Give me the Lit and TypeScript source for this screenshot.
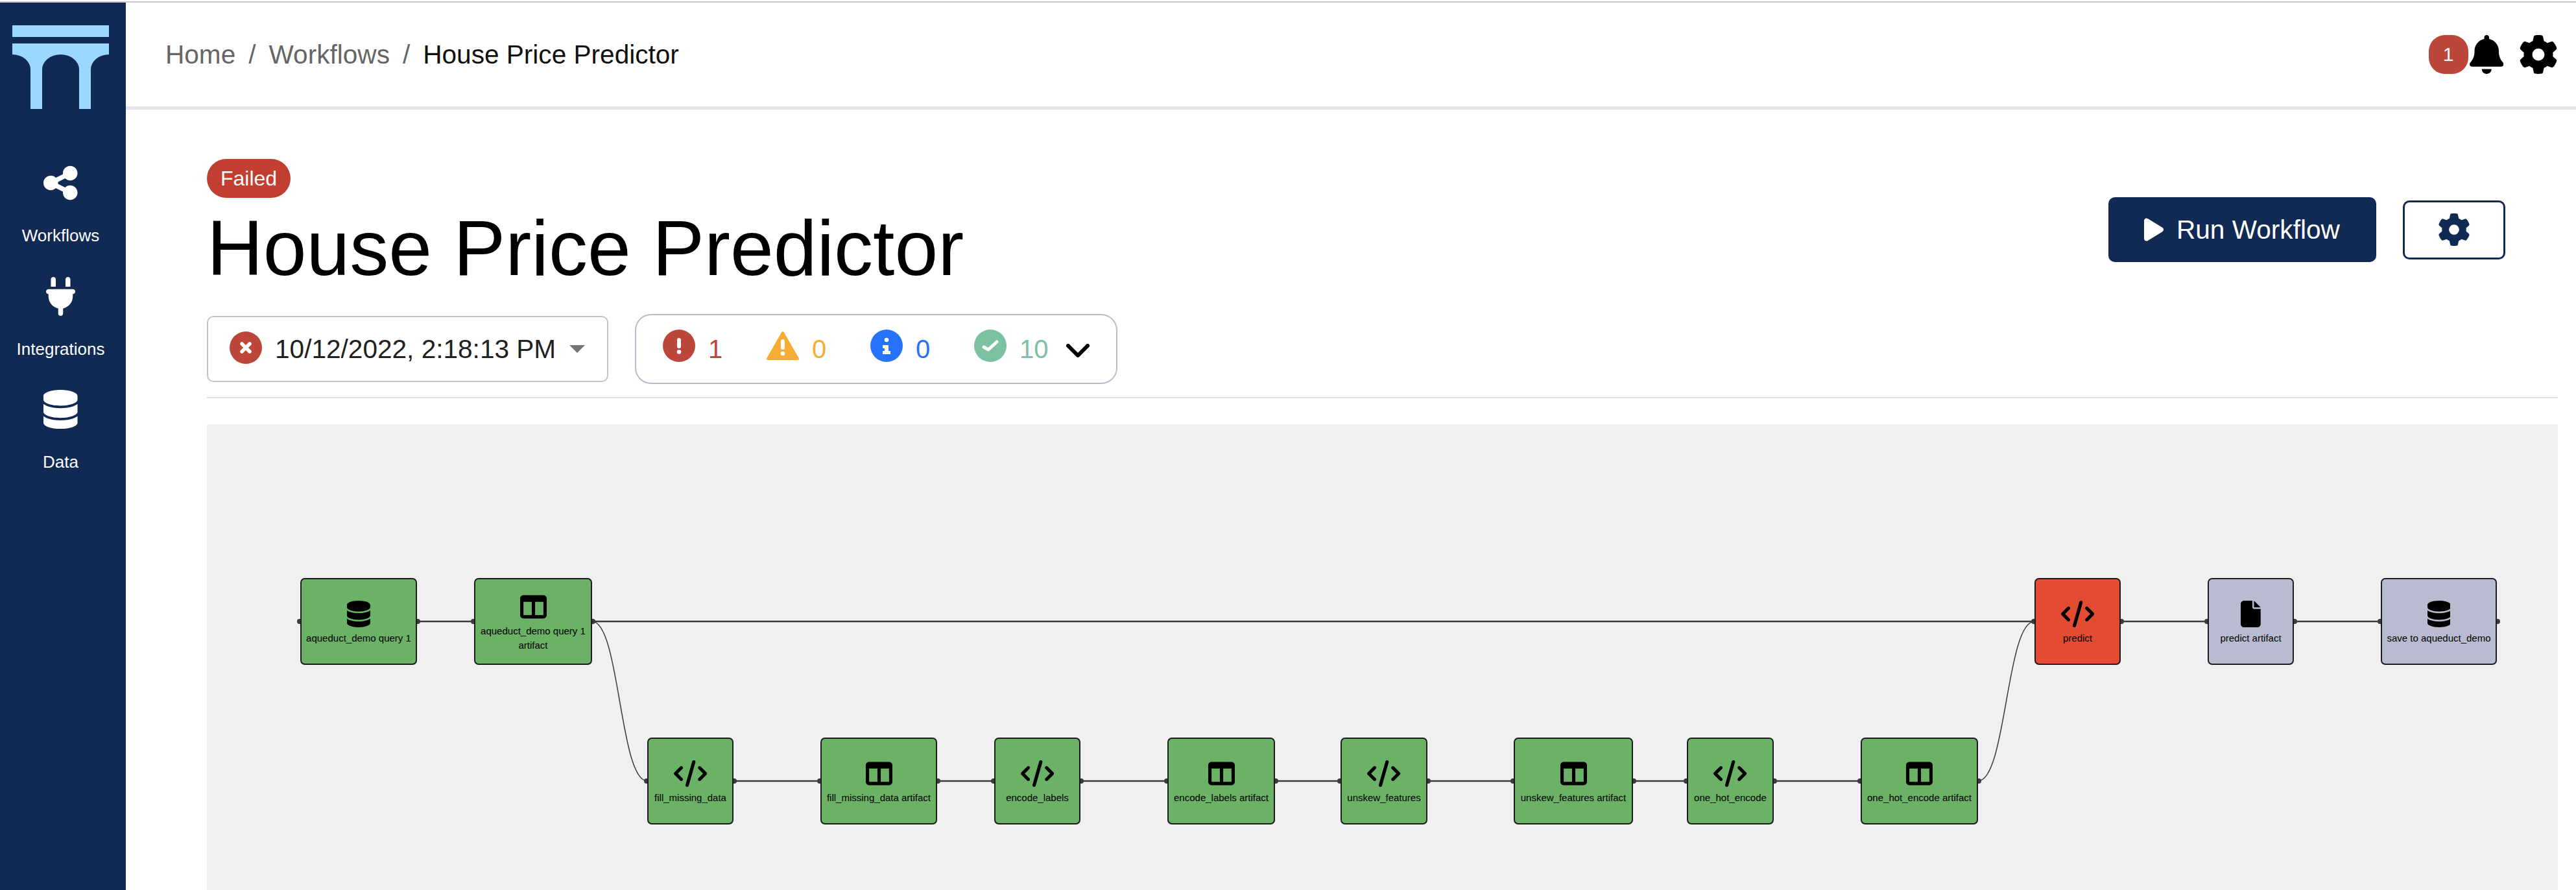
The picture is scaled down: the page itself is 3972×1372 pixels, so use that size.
import { LitElement, html, svg, css } from 'lit';
import { customElement } from 'lit/decorators.js';

type IconName = 'share' | 'plug' | 'database' | 'table' | 'code' | 'file' | 'gear' | 'bell' | 'play';

const ICONS: Record<IconName, { box: string; d: string }> = {
  share: {
    box: '0 0 448 512',
    d: 'M352 224c53 0 96-43 96-96s-43-96-96-96s-96 43-96 96c0 4 .2 8 .7 11.9l-94.1 47C145.4 170.2 121.9 160 96 160c-53 0-96 43-96 96s43 96 96 96c25.9 0 49.4-10.2 66.6-26.9l94.1 47c-.5 3.9-.7 7.8-.7 11.9c0 53 43 96 96 96s96-43 96-96s-43-96-96-96c-25.9 0-49.4 10.2-66.6 26.9l-94.1-47c.5-3.9 .7-7.8 .7-11.9s-.2-8-.7-11.9l94.1-47C302.6 213.8 326.1 224 352 224z',
  },
  plug: {
    box: '0 0 384 512',
    d: 'M96 0C78.3 0 64 14.3 64 32v96h64V32c0-17.7-14.3-32-32-32zM288 0c-17.7 0-32 14.3-32 32v96h64V32c0-17.7-14.3-32-32-32zM32 160c-17.7 0-32 14.3-32 32s14.3 32 32 32v32c0 77.4 55 142 128 156.8V480c0 17.7 14.3 32 32 32s32-14.3 32-32V412.8C297 398 352 333.4 352 256V224c17.7 0 32-14.3 32-32s-14.3-32-32-32H32z',
  },
  database: {
    box: '0 0 448 512',
    d: 'M448 80v48c0 44.2-100.3 80-224 80S0 172.2 0 128V80C0 35.8 100.3 0 224 0S448 35.8 448 80zM393.2 214.7c20.8-7.4 39.9-16.9 54.8-28.6V288c0 44.2-100.3 80-224 80S0 332.2 0 288V186.1c14.9 11.8 34 21.2 54.8 28.6C99.7 230.7 159.5 240 224 240s124.3-9.3 169.2-25.3zM0 346.1c14.9 11.8 34 21.2 54.8 28.6C99.7 390.7 159.5 400 224 400s124.3-9.3 169.2-25.3c20.8-7.4 39.9-16.9 54.8-28.6V432c0 44.2-100.3 80-224 80S0 476.2 0 432V346.1z',
  },
  table: {
    box: '0 0 512 512',
    d: 'M0 96C0 60.7 28.7 32 64 32H448c35.3 0 64 28.7 64 64V416c0 35.3-28.7 64-64 64H64c-35.3 0-64-28.7-64-64V96zm64 64V416H224V160H64zm384 0H288V416H448V160z',
  },
  code: {
    box: '0 0 640 512',
    d: 'M392.8 1.2c-17-4.9-34.7 5-39.6 22l-128 448c-4.9 17 5 34.7 22 39.6s34.7-5 39.6-22l128-448c4.9-17-5-34.7-22-39.6zm80.6 120.1c-12.5 12.5-12.5 32.8 0 45.3L562.7 256l-89.4 89.4c-12.5 12.5-12.5 32.8 0 45.3s32.8 12.5 45.3 0l112-112c12.5-12.5 12.5-32.8 0-45.3l-112-112c-12.5-12.5-32.8-12.5-45.3 0zm-306.7 0c-12.5-12.5-32.8-12.5-45.3 0l-112 112c-12.5 12.5-12.5 32.8 0 45.3l112 112c12.5 12.5 32.8 12.5 45.3 0s12.5-32.8 0-45.3L77.3 256l89.4-89.4c12.5-12.5 12.5-32.8 0-45.3z',
  },
  file: {
    box: '0 0 384 512',
    d: 'M0 64C0 28.7 28.7 0 64 0H224V128c0 17.7 14.3 32 32 32H384V448c0 35.3-28.7 64-64 64H64c-35.3 0-64-28.7-64-64V64zm384 64H256V0L384 128z',
  },
  gear: {
    box: '0 0 512 512',
    d: 'M495.9 166.6c3.2 8.7 .5 18.4-6.4 24.6l-43.3 39.4c1.1 8.3 1.7 16.8 1.7 25.4s-.6 17.1-1.7 25.4l43.3 39.4c6.9 6.2 9.6 15.9 6.4 24.6c-4.4 11.9-9.7 23.3-15.8 34.3l-4.7 8.1c-6.6 11-14 21.4-22.1 31.2c-5.9 7.2-15.7 9.6-24.5 6.8l-55.7-17.7c-13.4 10.3-28.2 18.9-44 25.4l-12.5 57.1c-2 9.1-9 16.3-18.2 17.8c-13.8 2.3-28 3.5-42.5 3.5s-28.7-1.2-42.5-3.5c-9.2-1.5-16.2-8.7-18.2-17.8l-12.5-57.1c-15.8-6.5-30.6-15.1-44-25.4L83.1 425.9c-8.8 2.8-18.6 .3-24.5-6.8c-8.1-9.8-15.5-20.2-22.1-31.2l-4.7-8.1c-6.1-11-11.4-22.4-15.8-34.3c-3.2-8.7-.5-18.4 6.4-24.6l43.3-39.4C64.6 273.1 64 264.6 64 256s.6-17.1 1.7-25.4L22.4 191.2c-6.9-6.2-9.6-15.9-6.4-24.6c4.4-11.9 9.7-23.3 15.8-34.3l4.7-8.1c6.6-11 14-21.4 22.1-31.2c5.9-7.2 15.7-9.6 24.5-6.8l55.7 17.7c13.4-10.3 28.2-18.9 44-25.4l12.5-57.1c2-9.1 9-16.3 18.2-17.8C227.3 1.2 241.5 0 256 0s28.7 1.2 42.5 3.5c9.2 1.5 16.2 8.7 18.2 17.8l12.5 57.1c15.8 6.5 30.6 15.1 44 25.4l55.7-17.7c8.8-2.8 18.6-.3 24.5 6.8c8.1 9.8 15.5 20.2 22.1 31.2l4.7 8.1c6.1 11 11.4 22.4 15.8 34.3zM256 336c44.2 0 80-35.8 80-80s-35.8-80-80-80s-80 35.8-80 80s35.8 80 80 80z',
  },
  bell: {
    box: '0 0 448 512',
    d: 'M224 0c-17.7 0-32 14.3-32 32V51.2C119 66 64 130.6 64 208v18.8c0 47-17.3 92.4-48.5 127.6l-7.4 8.3c-8.4 9.4-10.4 22.9-5.3 34.4S19.4 416 32 416H416c12.6 0 24-7.4 29.2-18.9s3.1-25-5.3-34.4l-7.4-8.3C401.3 319.2 384 273.9 384 226.8V208c0-77.4-55-142-128-156.8V32c0-17.7-14.3-32-32-32zm45.3 493.3c12-12 18.7-28.3 18.7-45.3H224 160c0 17 6.7 33.3 18.7 45.3s28.3 18.7 45.3 18.7s33.3-6.7 45.3-18.7z',
  },
  play: {
    box: '0 0 384 512',
    d: 'M73 39c-14.8-9.1-33.4-9.4-48.5-.9S0 62.6 0 80V432c0 17.4 9.4 33.4 24.5 41.9s33.7 8.1 48.5-.9L361 297c14.3-8.7 23-24.2 23-41s-8.7-32.2-23-41L73 39z',
  },
};

const icon = (name: IconName, cls = '') =>
  html`<svg class=${cls} viewBox=${ICONS[name].box} fill="currentColor"><path d=${ICONS[name].d}></path></svg>`;

interface DagNode {
  label: string;
  icon: IconName;
  x: number;
  w: number;
  row: 0 | 1;
  tone: 'ok' | 'fail' | 'idle';
}

// coordinates are relative to the canvas, this is the free diagram area
const ROW_Y = [237, 483];
const NODE_H = 134;
const NODES: DagNode[] = [
  { label: 'aqueduct_demo query 1', icon: 'database', x: 144, w: 180, row: 0, tone: 'ok' },
  { label: 'aqueduct_demo query 1 artifact', icon: 'table', x: 412, w: 182, row: 0, tone: 'ok' },
  { label: 'fill_missing_data', icon: 'code', x: 679, w: 133, row: 1, tone: 'ok' },
  { label: 'fill_missing_data artifact', icon: 'table', x: 946, w: 180, row: 1, tone: 'ok' },
  { label: 'encode_labels', icon: 'code', x: 1214, w: 133, row: 1, tone: 'ok' },
  { label: 'encode_labels artifact', icon: 'table', x: 1481, w: 166, row: 1, tone: 'ok' },
  { label: 'unskew_features', icon: 'code', x: 1748, w: 134, row: 1, tone: 'ok' },
  { label: 'unskew_features artifact', icon: 'table', x: 2015, w: 184, row: 1, tone: 'ok' },
  { label: 'one_hot_encode', icon: 'code', x: 2282, w: 134, row: 1, tone: 'ok' },
  { label: 'one_hot_encode artifact', icon: 'table', x: 2550, w: 181, row: 1, tone: 'ok' },
  { label: 'predict', icon: 'code', x: 2818, w: 133, row: 0, tone: 'fail' },
  { label: 'predict artifact', icon: 'file', x: 3085, w: 133, row: 0, tone: 'idle' },
  { label: 'save to aqueduct_demo', icon: 'database', x: 3352, w: 179, row: 0, tone: 'idle' },
];

const STATUS_COUNTS = [
  { kind: 'error', count: 1 },
  { kind: 'warning', count: 0 },
  { kind: 'info', count: 0 },
  { kind: 'success', count: 10 },
];

@customElement('app-root')
export class AppRoot extends LitElement {
  static styles = css`
    :host {
      display: block;
      font-family: 'Liberation Sans', Arial, sans-serif;
      color: #000;
      background: #fff;
    }
    * {
      box-sizing: border-box;
    }
    svg {
      display: block;
      flex: none;
    }

    .page {
      display: flex;
      height: 1370px;
      margin-top: 2px;
      border-top: 2px solid #c8c8c8;
      overflow: hidden;
    }

    .sidebar {
      flex: none;
      width: 194px;
      padding: 35px 7px 0 0;
      background: #102a53;
      color: #fff;
      display: flex;
      flex-direction: column;
      align-items: center;
    }
    .logo {
      width: 149px;
      height: 129px;
      color: #9bd8ff;
      margin-bottom: 84px;
    }
    .nav-item {
      height: 174.5px;
      display: flex;
      flex-direction: column;
      align-items: center;
    }
    .nav-icon {
      height: 60px;
    }
    .nav-label {
      margin-top: 36px;
      font-size: 26px;
      line-height: 30px;
    }

    .main {
      flex: 1;
      min-width: 0;
      display: flex;
      flex-direction: column;
    }

    .topbar {
      flex: none;
      height: 165px;
      padding: 0 28px 0 61px;
      border-bottom: 5px solid #e2e4ee;
      display: flex;
      align-items: center;
      justify-content: space-between;
    }
    .crumbs {
      display: flex;
      gap: 20px;
      font-size: 40.6px;
      color: #666;
    }
    .crumbs .current {
      color: #111;
    }
    .top-actions {
      display: flex;
      align-items: center;
    }
    .alert-count {
      width: 61px;
      height: 60px;
      border-radius: 25px;
      background: #bc4639;
      color: #fff;
      font-size: 30px;
      display: flex;
      align-items: center;
      justify-content: center;
    }
    .bell {
      height: 60px;
      margin-left: 2px;
    }
    .top-gear {
      height: 60px;
      margin-left: 24px;
    }

    .content {
      flex: 1;
      min-height: 0;
      padding: 76px 28px 0 125px;
      display: flex;
      flex-direction: column;
    }
    .head {
      flex: none;
      display: flex;
      justify-content: space-between;
      align-items: flex-start;
    }
    .status-pill {
      display: flex;
    }
    .pill {
      width: 129px;
      height: 60px;
      border-radius: 30px;
      background: #c13e31;
      color: #fff;
      font-size: 32px;
      display: flex;
      align-items: center;
      justify-content: center;
    }
    h1 {
      margin: 17px 0 0;
      font-size: 120px;
      line-height: 120px;
      font-weight: 400;
    }
    .actions {
      display: flex;
      align-items: center;
      gap: 41px;
      margin: 59px 81px 0 0;
    }
    .run {
      width: 413px;
      height: 100px;
      padding-left: 55px;
      border-radius: 10px;
      background: #102a53;
      color: #fff;
      font-size: 40.6px;
      display: flex;
      align-items: center;
      gap: 20px;
    }
    .run svg {
      width: 30px;
      height: 40px;
    }
    .settings {
      width: 158px;
      height: 91px;
      border: 3px solid #102a53;
      border-radius: 10px;
      color: #102a53;
      display: flex;
      align-items: center;
      justify-content: center;
    }
    .settings svg {
      height: 50px;
    }

    .filters {
      flex: none;
      margin-top: 42px;
      display: flex;
      align-items: center;
      gap: 41px;
    }
    .run-select {
      width: 619px;
      height: 102px;
      padding-left: 33px;
      border: 2.5px solid #c4c4c4;
      border-radius: 10px;
      color: #212121;
      font-size: 40.6px;
      display: flex;
      align-items: center;
    }
    .run-select .dot {
      width: 50px;
      height: 50px;
      margin: -4px 20px 0 0;
    }
    .caret {
      width: 0;
      height: 0;
      margin-left: 21px;
      border-left: 12.5px solid transparent;
      border-right: 12.5px solid transparent;
      border-top: 12.5px solid #757575;
    }
    .status-pane {
      width: 744px;
      height: 108px;
      padding-left: 41px;
      border: 2.5px solid #b9bcd1;
      border-radius: 25px;
      font-size: 40px;
      display: flex;
      align-items: center;
    }
    .status {
      width: 160px;
      display: flex;
      align-items: center;
      gap: 20px;
    }
    .status:last-of-type {
      width: auto;
    }
    .status svg {
      width: 50px;
      height: 50px;
      margin-bottom: 10px;
    }
    .status.error {
      color: #bc4639;
    }
    .status.warning {
      color: #f5ad36;
    }
    .status.info {
      color: #2672fa;
    }
    .status.success {
      color: #7bc1a2;
    }
    .chevron {
      width: 36px;
      height: 21px;
      margin: 5px 0 0 27px;
      color: #000;
    }

    .rule {
      flex: none;
      height: 2px;
      margin: 20px 0 40px;
      background: #e0e0e0;
    }

    .canvas {
      flex: 1;
      min-height: 0;
      position: relative;
      background: #f0f0f0;
      overflow: hidden;
    }
    .edges {
      position: absolute;
      inset: 0;
      width: 100%;
      height: 100%;
    }
    .edge {
      fill: none;
      stroke: #3c3c3c;
      stroke-width: 2.5;
    }
    .edge.curve {
      stroke-width: 1.5;
    }
    .handle {
      fill: #3c3c3c;
    }
    .node {
      position: absolute;
      height: ${NODE_H}px;
      padding: 5px 3px 0;
      border: 2.5px solid #1c1c1c;
      border-radius: 7px;
      display: flex;
      flex-direction: column;
      align-items: center;
      justify-content: center;
      gap: 6px;
      font-size: 15px;
      line-height: 22px;
      text-align: center;
    }
    .node svg {
      height: 41px;
    }
    .node.ok {
      background: #6bb166;
    }
    .node.fail {
      background: #e34c33;
    }
    .node.idle {
      background: #b9bcd1;
    }
  `;

  private statusIcon(kind: string) {
    switch (kind) {
      case 'error':
        return html`<svg viewBox="0 0 50 50">
          <circle cx="25" cy="25" r="25" fill="currentColor"></circle>
          <rect x="22" y="13" width="6" height="16" rx="3" fill="#fff"></rect>
          <circle cx="25" cy="34.5" r="3.3" fill="#fff"></circle>
        </svg>`;
      case 'warning':
        return html`<svg viewBox="0 0 50 50">
          <path d="M25 5L48 45H2Z" fill="currentColor" stroke="currentColor" stroke-width="4" stroke-linejoin="round"></path>
          <rect x="22" y="15" width="6" height="16" rx="3" fill="#fff"></rect>
          <circle cx="25" cy="37" r="3.3" fill="#fff"></circle>
        </svg>`;
      case 'info':
        return html`<svg viewBox="0 0 50 50">
          <circle cx="25" cy="25" r="25" fill="currentColor"></circle>
          <circle cx="25" cy="16" r="3.3" fill="#fff"></circle>
          <path d="M19 24H28V33H31V38H19V33H22V29H19Z" fill="#fff"></path>
        </svg>`;
      default:
        return html`<svg viewBox="0 0 50 50">
          <circle cx="25" cy="25" r="25" fill="currentColor"></circle>
          <path d="M15 27L22 31L35 19" fill="none" stroke="#fff" stroke-width="5" stroke-linecap="round" stroke-linejoin="round"></path>
        </svg>`;
    }
  }

  private renderEdges() {
    const mid = (n: DagNode) => ROW_Y[n.row] + NODE_H / 2;
    return html`<svg class="edges">
      ${NODES.slice(0, -1).map((from, i) => {
        const to = NODES[i + 1];
        const x1 = from.x + from.w;
        const x2 = to.x;
        const y1 = mid(from);
        const y2 = mid(to);
        if (y1 === y2) return svg`<path class="edge" d="M${x1} ${y1}H${x2}"></path>`;
        const cx = (x1 + x2) / 2;
        return svg`<path class="edge curve" d="M${x1} ${y1}C${cx} ${y1} ${cx} ${y2} ${x2} ${y2}"></path>`;
      })}
      <path class="edge" d="M${NODES[1].x + NODES[1].w} ${mid(NODES[1])}H${NODES[10].x}"></path>
      ${NODES.map(
        (n) => svg`
          <circle class="handle" cx=${n.x - 1} cy=${mid(n)} r="4"></circle>
          <circle class="handle" cx=${n.x + n.w + 1} cy=${mid(n)} r="4"></circle>
        `
      )}
    </svg>`;
  }

  render() {
    return html`
      <div class="page">
        <aside class="sidebar">
          <svg class="logo" viewBox="0 0 149 129" fill="currentColor">
            <rect width="149" height="18"></rect>
            <path d="M0 28H149V45A28 23 0 0 0 121 68V129H103V68A28.5 23 0 0 0 46 68V129H28V68A28 23 0 0 0 0 45Z"></path>
          </svg>
          <div class="nav-item">${icon('share', 'nav-icon')}<span class="nav-label">Workflows</span></div>
          <div class="nav-item">${icon('plug', 'nav-icon')}<span class="nav-label">Integrations</span></div>
          <div class="nav-item">${icon('database', 'nav-icon')}<span class="nav-label">Data</span></div>
        </aside>

        <div class="main">
          <header class="topbar">
            <nav class="crumbs">
              <span>Home</span><span>/</span><span>Workflows</span><span>/</span>
              <span class="current">House Price Predictor</span>
            </nav>
            <div class="top-actions">
              <span class="alert-count">1</span>
              ${icon('bell', 'bell')} ${icon('gear', 'top-gear')}
            </div>
          </header>

          <section class="content">
            <div class="head">
              <div>
                <div class="status-pill"><div class="pill">Failed</div></div>
                <h1>House Price Predictor</h1>
              </div>
              <div class="actions">
                <div class="run">${icon('play')}<span>Run Workflow</span></div>
                <div class="settings">${icon('gear')}</div>
              </div>
            </div>

            <div class="filters">
              <div class="run-select">
                <svg class="dot" viewBox="0 0 50 50">
                  <circle cx="25" cy="25" r="25" fill="#bc4639"></circle>
                  <path d="M19 19L31 31M31 19L19 31" stroke="#fff" stroke-width="5.5" stroke-linecap="round"></path>
                </svg>
                <span>10/12/2022, 2:18:13 PM</span>
                <span class="caret"></span>
              </div>
              <div class="status-pane">
                ${STATUS_COUNTS.map(
                  (s) => html`<div class="status ${s.kind}">${this.statusIcon(s.kind)}<span>${s.count}</span></div>`
                )}
                <svg class="chevron" viewBox="0 0 36 21">
                  <path d="M3 3L18 18L33 3" fill="none" stroke="currentColor" stroke-width="6" stroke-linecap="round" stroke-linejoin="round"></path>
                </svg>
              </div>
            </div>

            <div class="rule"></div>

            <div class="canvas">
              ${this.renderEdges()}
              ${NODES.map(
                (n) => html`<div class="node ${n.tone}" style="left:${n.x}px;top:${ROW_Y[n.row]}px;width:${n.w}px">
                  ${icon(n.icon)}<span>${n.label}</span>
                </div>`
              )}
            </div>
          </section>
        </div>
      </div>
    `;
  }
}

declare global {
  interface HTMLElementTagNameMap {
    'app-root': AppRoot;
  }
}
